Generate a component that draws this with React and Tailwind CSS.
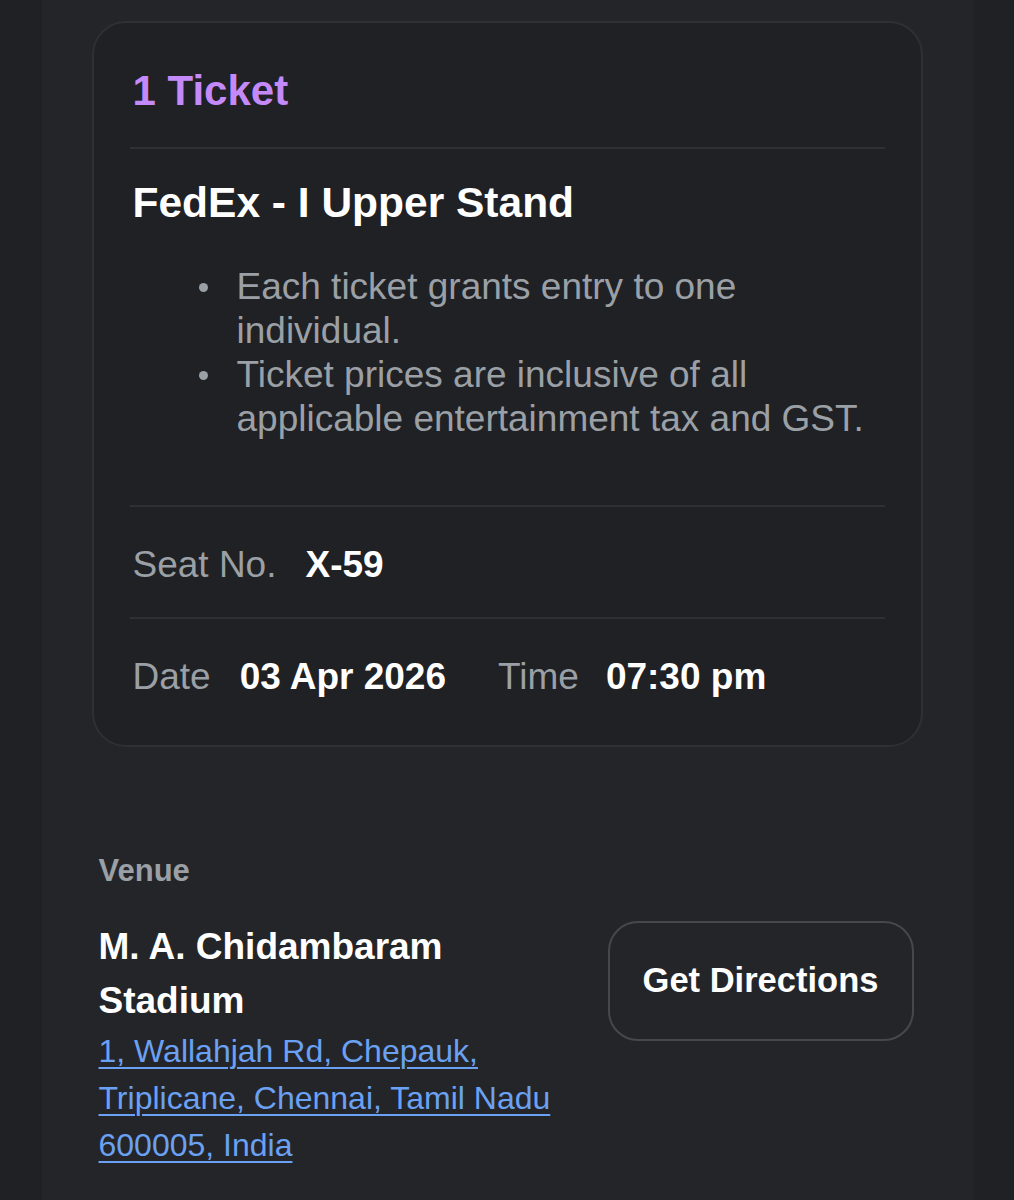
export default function App() {
  const font = { fontFamily: '"Liberation Sans", Arial, Helvetica, sans-serif' };
  return (
    <div className="w-full h-[1200px] overflow-hidden bg-[#202124] flex justify-center" style={font}>
      <div className="w-[931px] h-full bg-[#242528] pt-[21px]">
        <div className="mx-[50px] rounded-[34px] border-2 border-[#2f3033] bg-[#202124] px-[36px] pt-[44px] pb-[46px]">
          <div className="text-[42px] leading-[48px] font-bold text-[#c58af9] pl-[3px]">1 Ticket</div>
          <div className="mt-[32px] h-[2px] bg-[#2f3033]" />
          <div className="mt-[30px] text-[42.5px] leading-[48px] font-bold text-white pl-[3px]">FedEx - I Upper Stand</div>
          <ul className="mt-[38px] mb-[64px] pl-[69px] text-[37px] leading-[44px] text-[#9aa0a6]">
            <li className="flex">
              <span className="w-[38px] shrink-0 flex pt-[18px]"><span className="w-[9px] h-[9px] rounded-full bg-[#9aa0a6]" /></span>
              <span>Each ticket grants entry to one individual.</span>
            </li>
            <li className="flex">
              <span className="w-[38px] shrink-0 flex pt-[18px]"><span className="w-[9px] h-[9px] rounded-full bg-[#9aa0a6]" /></span>
              <span>Ticket prices are inclusive of all applicable entertainment tax and GST.</span>
            </li>
          </ul>
          <div className="h-[2px] bg-[#2f3033]" />
          <div className="mt-[36px] mb-[30px] flex items-baseline text-[37px] leading-[44px] pl-[3px]">
            <span className="text-[#9aa0a6]">Seat No.</span>
            <span className="ml-[29px] font-bold text-white">X-59</span>
          </div>
          <div className="h-[2px] bg-[#2f3033]" />
          <div className="mt-[36px] flex items-baseline text-[37px] leading-[44px] pl-[3px]">
            <span className="text-[#9aa0a6]">Date</span>
            <span className="ml-[29px] font-bold text-white">03 Apr 2026</span>
            <span className="ml-[52px] text-[#9aa0a6]">Time</span>
            <span className="ml-[27px] font-bold text-white">07:30 pm</span>
          </div>
        </div>

        <div className="px-[57px] mt-[106px]">
          <div className="text-[31px] leading-[36px] font-bold text-[#9aa0a6]">Venue</div>
          <div className="mt-[31px] flex items-start justify-between">
            <div className="w-[470px]">
              <div className="text-[37px] leading-[54px] font-bold text-white">M. A. Chidambaram Stadium</div>
              <div className="text-[32px] leading-[47px] text-[#6ba1f3]">
                <a className="underline decoration-2 underline-offset-[5px]">1, Wallahjah Rd, Chepauk, Triplicane, Chennai, Tamil Nadu 600005, India</a>
              </div>
            </div>
            <button className="mt-[1px] mr-[2px] w-[306px] h-[120px] rounded-[30px] border-2 border-[#46484c] bg-[#242528] text-[34.5px] font-bold text-white">
              Get Directions
            </button>
          </div>
        </div>
      </div>
    </div>
  );
}
